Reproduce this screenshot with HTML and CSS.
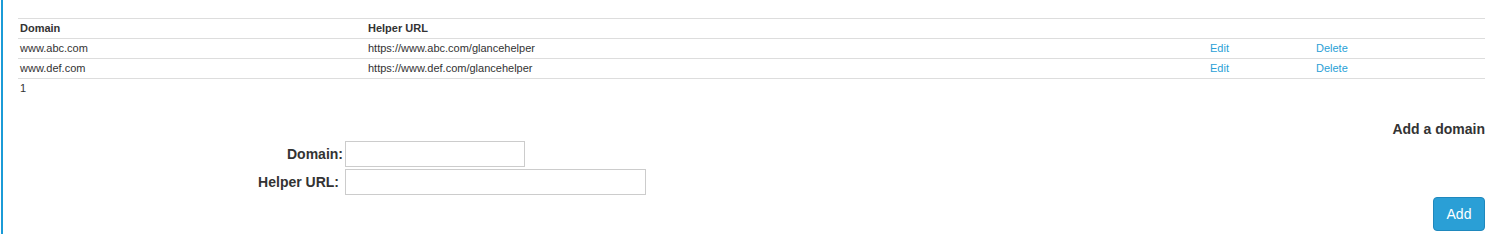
FILE: index.html
```html
<!DOCTYPE html>
<html lang="en">
<head>
<meta charset="UTF-8">
<title>Helper Domains</title>
<link rel="stylesheet" href="styles.css">
</head>
<body>
    <div class="panel">
        <table class="domain-table">
            <thead>
                <tr>
                    <th class="col-domain">Domain</th>
                    <th class="col-url">Helper URL</th>
                    <th class="col-edit"></th>
                    <th></th>
                </tr>
            </thead>
            <tbody>
                <tr>
                    <td>www.abc.com</td>
                    <td>https://www.abc.com/glancehelper</td>
                    <td><a href="#">Edit</a></td>
                    <td><a href="#">Delete</a></td>
                </tr>
                <tr>
                    <td>www.def.com</td>
                    <td>https://www.def.com/glancehelper</td>
                    <td><a href="#">Edit</a></td>
                    <td><a href="#">Delete</a></td>
                </tr>
            </tbody>
        </table>
        <div class="pager">1</div>

        <form class="add-form">
            <h3 class="add-title">Add a domain</h3>
            <div class="form-row">
                <label for="domain">Domain:</label>
                <input type="text" id="domain" class="input-short">
            </div>
            <div class="form-row">
                <label for="helper" class="label-pad">Helper URL:</label>
                <input type="text" id="helper" class="input-long">
            </div>
            <div class="form-actions">
                <button type="button" class="btn">Add</button>
            </div>
        </form>
    </div>
</body>
</html>
```

FILE: styles.css
```css
body {
    margin: 0;
    background-color: #ffffff;
    color: #333333;
    font-family: 'Liberation Sans', Arial, sans-serif;
}
.panel {
    margin-left: 1px;
    border-left: 2px solid #1b9bd7;
    padding: 18px 11px 3px 15px;
}
.domain-table {
    width: 100%;
    border-collapse: collapse;
    table-layout: fixed;
    font-size: 11px;
}
.domain-table th,
.domain-table td {
    height: 18px;
    padding: 0 2px 1px;
    text-align: left;
    border-top: 1px solid #dddddd;
    border-bottom: 1px solid #dddddd;
    white-space: nowrap;
}
.domain-table th {
    font-weight: bold;
}
.col-domain {
    width: 344px;
}
.col-url {
    width: 838px;
}
.col-edit {
    width: 102px;
}
.domain-table a {
    color: #2a9fd6;
    text-decoration: none;
}
.pager {
    font-size: 11px;
    line-height: 16px;
    padding: 1px 2px 0;
}
.add-form {
    margin-top: 25px;
}
.add-title {
    margin: 0 0 4px;
    font-size: 14px;
    line-height: 16px;
    text-align: right;
}
.form-row {
    display: flex;
    align-items: center;
    margin-bottom: 2px;
}
.form-row label {
    width: 325px;
    margin-right: 2px;
    text-align: right;
    font-size: 14px;
    font-weight: bold;
}
.form-row .label-pad {
    width: 321px;
    margin-right: 6px;
}
.form-row input {
    box-sizing: border-box;
    height: 26px;
    border: 1px solid #cccccc;
    padding: 2px 4px;
    font-family: inherit;
    font-size: 13px;
}
.input-short {
    width: 180px;
}
.input-long {
    width: 301px;
}
.form-actions {
    display: flex;
    justify-content: flex-end;
}
.btn {
    width: 52px;
    height: 34px;
    border: 1px solid #1f88bd;
    border-radius: 4px;
    background-color: #2a9fd6;
    color: #ffffff;
    font-family: inherit;
    font-size: 14px;
}
```
